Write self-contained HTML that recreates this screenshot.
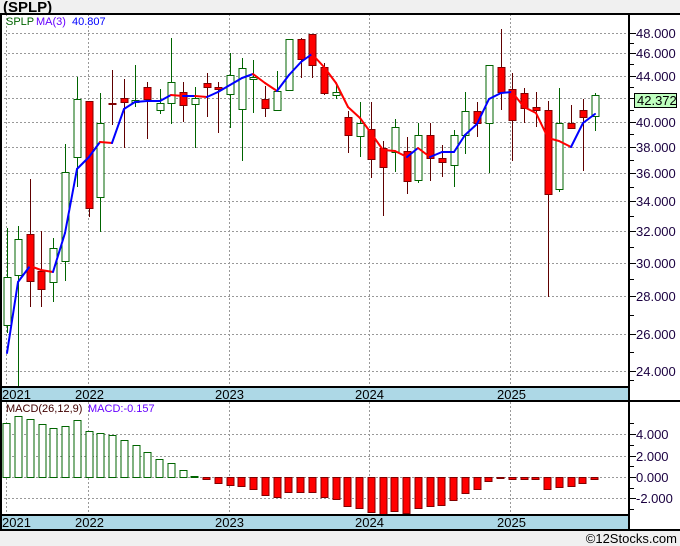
<!DOCTYPE html>
<html><head><meta charset="utf-8"><style>
html,body{margin:0;padding:0;background:#f0f0f0;}
body{width:680px;height:546px;overflow:hidden;position:relative;font-family:"Liberation Sans",sans-serif;}
svg{position:absolute;left:0;top:0;}
</style></head><body>
<svg id="s" width="680" height="546" xmlns="http://www.w3.org/2000/svg" font-family="Liberation Sans, sans-serif">
<rect x="0" y="0" width="680" height="546" fill="#f0f0f0"/>
<rect x="0" y="14" width="680" height="516" fill="#fff"/>
<g id="grid"></g>
<rect x="0" y="387" width="629" height="14" fill="#add8e6"/>
<rect x="0" y="515" width="629" height="15" fill="#add8e6"/>
<g id="cand"></g>
<g id="ma" fill="none" stroke-width="2"></g>
<g id="macd"></g>
<g stroke="#000" stroke-width="2" fill="none">
<line x1="0" y1="14" x2="680" y2="14"/>
<line x1="1" y1="14" x2="1" y2="530"/>
<line x1="629" y1="14" x2="629" y2="530"/>
<line x1="0" y1="387" x2="629" y2="387"/>
<line x1="0" y1="401" x2="680" y2="401"/>
<line x1="0" y1="515" x2="629" y2="515"/>
<line x1="0" y1="530" x2="680" y2="530"/>
</g>
<g id="ticks" stroke="#000" stroke-width="1"></g>
<text x="3" y="12" font-size="15" font-weight="bold" fill="#000">(SPLP)</text>
<text x="6" y="25" font-size="11" fill="#006400">SPLP</text>
<text x="36" y="25" font-size="11" fill="#6600ff">MA(3)</text>
<text x="72" y="25" font-size="11" fill="#0000ff">40.807</text>
<text x="6" y="412" font-size="11" fill="#400000">MACD(26,12,9)</text>
<text x="88" y="412" font-size="11" fill="#6600ff">MACD:-0.157</text>
<g font-size="13" fill="#000">
<text x="2" y="399">2021</text><text x="75" y="399">2022</text><text x="215" y="399">2023</text><text x="355" y="399">2024</text><text x="497" y="399">2025</text>
<text x="2" y="527">2021</text><text x="75" y="527">2022</text><text x="215" y="527">2023</text><text x="355" y="527">2024</text><text x="497" y="527">2025</text>
</g>
<g font-size="13" fill="#1a0040">
<text x="636" y="38">48.000</text><text x="636" y="58">46.000</text><text x="636" y="81">44.000</text>
<text x="636" y="127">40.000</text><text x="636" y="152">38.000</text><text x="636" y="178">36.000</text>
<text x="636" y="206">34.000</text><text x="636" y="236">32.000</text><text x="636" y="268">30.000</text>
<text x="636" y="301">28.000</text><text x="636" y="339">26.000</text><text x="636" y="376">24.000</text>
<text x="636" y="439">4.000</text><text x="636" y="461">2.000</text><text x="636" y="482">0.000</text><text x="636" y="503">-2.000</text>
</g>
<rect x="634.5" y="93.5" width="42" height="14" fill="#bfffbf" stroke="#000"/>
<text x="637" y="105" font-size="13" fill="#000">42.372</text>
<text x="677" y="543" font-size="13" fill="#000" text-anchor="end">©12Stocks.com</text>
</svg>
<script>
var NS="http://www.w3.org/2000/svg";
function el(p,t,a){var e=document.createElementNS(NS,t);for(var k in a)e.setAttribute(k,a[k]);document.getElementById(p).appendChild(e);return e;}
// grid
[33,53,76,98,122,147,173,201,231,263,296,334,371].forEach(function(y){el("grid","line",{x1:0,x2:629,y1:y+.5,y2:y+.5,stroke:"#999","stroke-dasharray":"2,2"});el("ticks","line",{x1:629,x2:636,y1:y+.5,y2:y+.5});});
[43,64,87,110,134,160,187,216,247,279,315,352,380].forEach(function(y){el("ticks","line",{x1:629,x2:634,y1:y+.5,y2:y+.5});});
[434,456,477,498].forEach(function(y){el("grid","line",{x1:0,x2:629,y1:y+.5,y2:y+.5,stroke:"#999","stroke-dasharray":"2,2"});el("ticks","line",{x1:629,x2:636,y1:y+.5,y2:y+.5});});
[423,445,466,488,509].forEach(function(y){el("ticks","line",{x1:629,x2:634,y1:y+.5,y2:y+.5});});
[6,88,229,369,510].forEach(function(x){el("grid","line",{x1:x+.5,x2:x+.5,y1:14,y2:530,stroke:"#999","stroke-dasharray":"2,2"});});
// candles: x, high, bodyTop, bodyBot, low, green?
var C=[[7,228,277,325,333,1],[18,226,239,275,387,1],[30,179,234,281,307,0],[41,231,271,289,307,0],[53,238,248,282,302,1],[65,144,172,261,281,1],[77,77,99,157,187,1],[89,101,101,208,217,0],[100,93,123,197,232,1],[112,70,103,104,125,0],[124,79,98,102,148,0],[135,65,100,102,107,1],[147,82,87,99,139,0],[160,89,103,110,114,1],[171,38,82,103,124,1],[183,82,92,105,122,0],[195,87,98,104,148,1],[207,73,83,87,117,0],[218,82,87,89,133,0],[230,53,75,94,128,1],[242,58,68,109,161,1],[253,60,77,79,113,1],[265,86,99,108,117,0],[277,71,91,110,110,1],[289,39,39,90,90,1],[301,38,39,59,78,0],[312,34,34,65,78,0],[324,63,67,93,95,0],[336,85,92,95,99,1],[348,111,117,135,153,0],[360,102,123,136,157,1],[371,102,129,159,178,0],[383,141,148,167,216,0],[395,119,127,152,172,1],[407,137,151,181,194,0],[418,123,135,180,183,1],[430,123,135,158,181,0],[442,145,158,162,177,0],[454,130,135,165,187,1],[465,92,111,135,154,1],[477,102,111,123,137,0],[489,65,65,123,173,1],[501,29,67,92,110,0],[512,73,89,120,161,0],[524,88,93,108,123,0],[536,92,107,110,127,0],[548,101,110,194,297,0],[559,88,123,189,192,1],[571,105,123,128,128,0],[583,99,110,117,171,0],[595,93,95,116,131,1]];
C.forEach(function(c){var g=c[5];
el("cand","line",{x1:c[0]+.5,x2:c[0]+.5,y1:c[1],y2:c[4],stroke:g?"#006400":"#600000","stroke-width":1});
el("cand","rect",{x:c[0]-3,y:c[2]+.5,width:7,height:Math.max(1,c[3]-c[2]),fill:g?"#fff":"#ff0000",stroke:g?"#006400":"#800000","stroke-width":1});});
var M=[[7,353],[18,282],[30,266],[41,270],[53,272],[65,233],[77,169],[89,157],[100,142],[112,143],[124,109],[135,102],[147,101],[160,101],[171,95],[183,96],[195,96],[207,97],[218,92],[230,85],[242,78],[253,74],[265,83],[277,91],[289,75],[301,62],[312,54],[324,67],[336,83],[348,107],[360,118],[371,133],[383,150],[395,151],[407,157],[418,148],[430,157],[442,152],[454,152],[465,135],[477,124],[489,99],[501,93],[512,92],[524,107],[536,113],[548,138],[559,141],[571,147],[583,123],[595,114]];
for(var i=1;i<M.length;i++){el("ma","line",{x1:M[i-1][0],y1:M[i-1][1],x2:M[i][0],y2:M[i][1],stroke:M[i][1]<=M[i-1][1]?"#0000ff":"#ff0000","stroke-linecap":"round"});}
// macd
var G=[[6,423],[18,416],[30,419],[42,424],[53,428],[65,426],[77,420],[89,431],[100,433],[112,435],[124,440],[136,445],[147,452],[159,459],[171,463],[183,470],[194,476]];
G.forEach(function(b){el("macd","rect",{x:b[0]-3,y:b[1]+.5,width:7,height:478-b[1]-1,fill:"#fff",stroke:"#006400","stroke-width":1});});
var R=[[206,479],[218,483],[230,485],[241,486],[253,489],[265,495],[277,497],[288,492],[300,492],[312,492],[324,497],[336,499],[347,506],[359,508],[371,512],[383,515],[394,511],[406,513],[418,508],[430,506],[441,505],[453,500],[465,493],[477,489],[488,481],[500,478],[512,479],[524,479],[535,479],[547,489],[559,487],[571,486],[582,483],[594,479]];
R.forEach(function(b){el("macd","rect",{x:b[0]-3,y:477.5,width:7,height:Math.max(1,b[1]-477),fill:"#ff0000",stroke:"#800000","stroke-width":1});});
</script>
</body></html>
